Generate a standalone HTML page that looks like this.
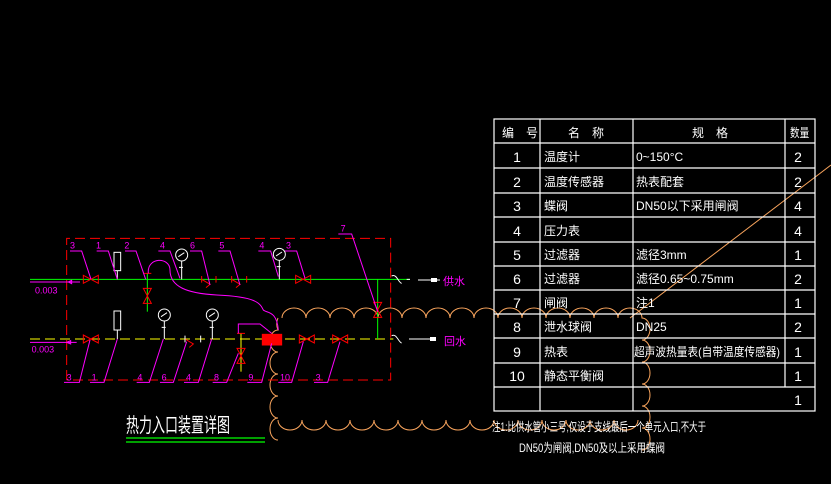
<!DOCTYPE html>
<html><head><meta charset="utf-8"><style>
html,body{margin:0;padding:0;background:#000;width:831px;height:484px;overflow:hidden}
svg{display:block}
text{font-family:"Liberation Sans","Noto Sans CJK SC",sans-serif}
</style></head><body>
<svg width="831" height="484" viewBox="0 0 831 484" xmlns="http://www.w3.org/2000/svg">
<rect width="831" height="484" fill="#000"/>
<line x1="831" y1="165" x2="630" y2="318" stroke="#f7a35c" stroke-width="1"/>
<path fill="none" stroke="#f7a35c" stroke-width="1" d="M282,318 a12,10 0 0 1 24,0 a12,10 0 0 1 24,0 a12,10 0 0 1 24,0 a12,10 0 0 1 24,0 a12,10 0 0 1 24,0 a12,10 0 0 1 24,0 a12,10 0 0 1 24,0 a12,10 0 0 1 24,0 a12,10 0 0 1 24,0 a12,10 0 0 1 24,0 a12,10 0 0 1 24,0 a12,10 0 0 1 24,0 a12,10 0 0 1 24,0 a12,10 0 0 1 24,0 a12,10 0 0 1 24,0 a8,11 0 0 1 0,22 a8,11 0 0 1 0,22 a8,11 0 0 1 0,22 a8,11 0 0 1 0,22 a8,11 0 0 1 0,22 a8,11 0 0 1 0,22 M638,420 a12,10 0 0 1 -24,0 a12,10 0 0 1 -24,0 a12,10 0 0 1 -24,0 a12,10 0 0 1 -24,0 a12,10 0 0 1 -24,0 a12,10 0 0 1 -24,0 a12,10 0 0 1 -24,0 a12,10 0 0 1 -24,0 a12,10 0 0 1 -24,0 a12,10 0 0 1 -24,0 a12,10 0 0 1 -24,0 a12,10 0 0 1 -24,0 a12,10 0 0 1 -24,0 a12,10 0 0 1 -24,0 a12,10 0 0 1 -24,0 M278,440 a8,11 0 0 1 0,-22 a8,11 0 0 1 0,-22 a8,11 0 0 1 0,-22 a8,11 0 0 1 0,-22 a8,11 0 0 1 0,-22 a8,11 0 0 1 0,-12"/>
<g transform="translate(30,220) scale(0.33333)" fill="none" stroke-width="3">
 <path d="M110,480 V55 H1082 V480 H110" stroke="#f00" stroke-dasharray="30,15"/>
 <line x1="0" y1="178" x2="1140" y2="178" stroke="#0f0"/>
 <line x1="0" y1="357" x2="1090" y2="357" stroke="#ff0" stroke-dasharray="30,15"/>
 <line x1="1043" y1="178" x2="1043" y2="357" stroke="#0f0"/>
 <line x1="352" y1="160" x2="352" y2="275" stroke="#0f0"/>
 <line x1="633" y1="340" x2="633" y2="455" stroke="#ff0"/>
 <path d="M0,186 H150 M115,186 l10,-5 v10 z" stroke="#f0f"/>
 <path d="M0,367 H140 M110,367 l12,-5 v10 z" stroke="#f0f"/>
 <g stroke="#f00">
  <path d="M160,166 v24 l45,-24 v24 z"/><path d="M797,166 v24 l45,-24 v24 z"/>
  <path d="M160,345 v24 l45,-24 v24 z"/><path d="M808,345 v24 l45,-24 v24 z"/><path d="M908,345 v24 l45,-24 v24 z"/>
  <path d="M340,205 h24 l-24,45 h24 z M340,160 h24"/><path d="M621,385 h24 l-24,45 h24 z M621,340 h24"/>
  <path d="M1031,247 h24 l-24,45 h24 z"/>
  <path d="M515,178 l25,15 l-12,10 M515,168 v20 M558,168 v20"/>
  <path d="M605,178 l25,15 l-12,10 M605,168 v20 M650,168 v20"/>
  <path d="M465,357 l25,15 l-12,10"/>
 </g>
 <rect x="697" y="343" width="58" height="32" fill="#f00" stroke="#f00"/>
 <path d="M465,347 v20 M512,347 v20" stroke="#fff"/>
 <g stroke="#fff">
  <rect x="252" y="97" width="20" height="55"/><line x1="262" y1="152" x2="262" y2="178"/>
  <rect x="252" y="273" width="20" height="57"/><line x1="262" y1="330" x2="262" y2="357"/>
  <circle cx="455" cy="105" r="18"/><path d="M455,123 v55 M447,142 h12 M445,110 l18,-12"/>
  <circle cx="748" cy="103" r="18"/><path d="M748,121 v57 M740,140 h12 M738,108 l18,-12"/>
  <circle cx="403" cy="285" r="18"/><path d="M403,303 v54 M395,322 h12 M393,290 l18,-12"/>
  <circle cx="547" cy="285" r="18"/><path d="M547,303 v54 M539,322 h12 M537,290 l18,-12"/>
  <path d="M1085,168 c15,-8 20,20 30,22 M1130,178 h10"/>
  <path d="M1085,347 c15,-8 20,20 30,22"/>
 </g>
 <g stroke="#f0f">
  <path d="M120,93 H155 L183,178"/><path d="M200,93 H235 L262,178"/><path d="M285,93 H318 L347,178"/>
  <path d="M385,93 H420 L450,175"/><path d="M480,93 H515 L540,195"/><path d="M565,93 H600 L630,195"/>
  <path d="M685,93 H722 L745,170"/><path d="M765,93 H800 L825,175"/><path d="M925,42 H965 L1043,275"/>
  <path d="M102,487 H148 L180,360"/><path d="M180,487 H222 L262,357"/><path d="M320,487 H358 L400,357"/>
  <path d="M390,487 H430 L470,365"/><path d="M462,487 H505 L545,357"/><path d="M548,487 H590 L625,400"/>
  <path d="M652,487 H695 L725,370"/><path d="M745,487 H785 L820,365"/><path d="M852,487 H893 L930,365"/>
  <path d="M355,160 C350,110 420,110 420,150 C420,200 470,220 560,225 C680,230 690,250 700,270 C710,280 740,270 745,330"/>
  <path d="M625,340 V312 H690 L725,340"/>
 </g>
 <g fill="#f0f" font-size="27" stroke="none">
  <text x="120" y="86">3</text><text x="198" y="86">1</text><text x="283" y="86">2</text>
  <text x="390" y="86">4</text><text x="480" y="86">6</text><text x="568" y="86">5</text>
  <text x="688" y="86">4</text><text x="768" y="86">3</text><text x="932" y="35">7</text>
  <text x="110" y="482">3</text><text x="185" y="482">1</text><text x="322" y="482">4</text>
  <text x="395" y="482">6</text><text x="468" y="482">4</text><text x="552" y="482">8</text>
  <text x="655" y="482">9</text><text x="750" y="482">10</text><text x="857" y="482">3</text>
  <text x="15" y="220">0.003</text><text x="5" y="398">0.003</text>
 </g>
</g>
<line x1="418" y1="280" x2="440" y2="280" stroke="#fff"/><rect x="431" y="278" width="6" height="4" fill="#fff"/>
<line x1="409" y1="339" x2="436" y2="339" stroke="#fff"/><rect x="430" y="337" width="6" height="4" fill="#fff"/>
<text x="443" y="285" font-size="11" fill="#f0f">供水</text>
<text x="444" y="345" font-size="11" fill="#f0f">回水</text>
<text transform="translate(126,432) scale(0.65,1)" font-size="20" fill="#fff">热力入口装置详图</text>
<line x1="126" y1="438" x2="265" y2="438" stroke="#0f0" stroke-width="1.3"/>
<line x1="126" y1="442" x2="265" y2="442" stroke="#0f0" stroke-width="1.3"/>
<g stroke="#fff" stroke-width="1.2" fill="none">
 <rect x="494" y="119" width="321" height="292"/>
 <line x1="540" y1="119" x2="540" y2="411"/><line x1="633" y1="119" x2="633" y2="411"/>
 <line x1="785" y1="119" x2="785" y2="387"/>
 <path d="M494,143H815M494,168H815M494,193H815M494,217H815M494,242H815M494,266H815M494,290H815M494,314H815M494,338H815M494,363H815M494,387H815"/>
</g>
<g fill="#fff" font-size="14">
 <text x="502" y="137" font-size="12">编　号</text><text x="568" y="137" font-size="12">名　称</text><text x="692" y="137" font-size="12">规　格</text><text transform="translate(790,137) scale(0.8,1)" font-size="12">数量</text>
 <g text-anchor="middle">
  <text x="517" y="162">1</text><text x="517" y="187">2</text><text x="517" y="211">3</text><text x="517" y="236">4</text><text x="517" y="260">5</text><text x="517" y="284">6</text><text x="517" y="308">7</text><text x="517" y="332">8</text><text x="517" y="357">9</text><text x="517" y="381">10</text>
  <text x="798" y="162">2</text><text x="798" y="187">2</text><text x="798" y="211">4</text><text x="798" y="236">4</text><text x="798" y="260">1</text><text x="798" y="284">2</text><text x="798" y="308">1</text><text x="798" y="332">2</text><text x="798" y="357">1</text><text x="798" y="381">1</text><text x="798" y="405">1</text>
 </g>
 <g font-size="12">
  <text x="544" y="161">温度计</text><text x="544" y="186">温度传感器</text><text x="544" y="210">蝶阀</text><text x="544" y="235">压力表</text><text x="544" y="259">过滤器</text><text x="544" y="283">过滤器</text><text x="544" y="307">闸阀</text><text x="544" y="331">泄水球阀</text><text x="544" y="356">热表</text><text x="544" y="380">静态平衡阀</text>
  <text x="636" y="161">0~150°C</text><text x="636" y="186">热表配套</text><text x="636" y="210">DN50以下采用闸阀</text><text x="636" y="259">滤径3mm</text><text x="636" y="283">滤径0.65~0.75mm</text><text x="636" y="307">注1</text><text x="636" y="331">DN25</text><text x="634" y="356" textLength="146" lengthAdjust="spacingAndGlyphs">超声波热量表(自带温度传感器)</text>
 </g>
</g>
<text x="492" y="431" font-size="12" fill="#fff" textLength="214" lengthAdjust="spacingAndGlyphs">注1:比供水管小三号,仅设于支线最后一个单元入口,不大于</text>
<text x="519" y="452" font-size="12" fill="#fff" textLength="146" lengthAdjust="spacingAndGlyphs">DN50为闸阀,DN50及以上采用蝶阀</text>
</svg>
</body></html>
